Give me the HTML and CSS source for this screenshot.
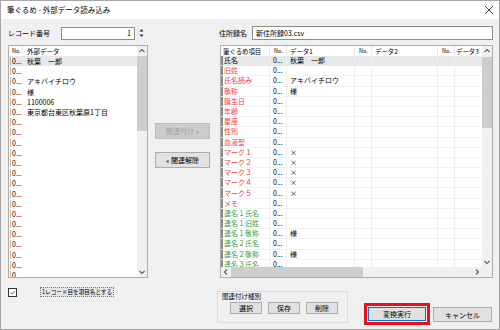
FILE: index.html
```html
<!DOCTYPE html>
<html lang="ja">
<head>
<meta charset="utf-8">
<title>筆ぐるめ - 外部データ読み込み</title>
<link rel="stylesheet" href="styles.css">
</head>
<body>
<div class="window">
  <div class="titlebar">
    <span class="title">筆ぐるめ - 外部データ読み込み</span>
    <svg class="close" width="10" height="10" viewBox="0 0 10 10"><path d="M1 1 L9 9 M9 1 L1 9" stroke="#333" stroke-width="0.9" fill="none"/></svg>
  </div>
  <div class="main">
    <div class="left">
      <div class="fieldrow">
        <span class="rec-label">レコード番号</span>
        <div class="spin-input">1</div>
        <div class="spin-btns">
          <svg width="9" height="6" viewBox="0 0 9 6"><path d="M2.5 4.5 L4.5 2 L6.5 4.5 Z" fill="#333"/></svg>
          <svg width="9" height="6" viewBox="0 0 9 6"><path d="M2.5 1.5 L4.5 4 L6.5 1.5 Z" fill="#333"/></svg>
        </div>
      </div>
      <div class="listbox">
        <div class="list-body">
          <div class="lhead"><span class="lc-no hsmall">No.</span><span class="lc-data">外部データ</span></div>
          <div class="lrow sel"><span class="lc-no"><i class="ind"></i>0...</span><span class="lc-data">秋葉　一郎</span></div>
          <div class="lrow"><span class="lc-no"><i class="ind"></i>0...</span><span class="lc-data"></span></div>
          <div class="lrow"><span class="lc-no"><i class="ind"></i>0...</span><span class="lc-data">アキバイチロウ</span></div>
          <div class="lrow"><span class="lc-no"><i class="ind"></i>0...</span><span class="lc-data">様</span></div>
          <div class="lrow"><span class="lc-no"><i class="ind"></i>0...</span><span class="lc-data">1100006</span></div>
          <div class="lrow"><span class="lc-no"><i class="ind"></i>0...</span><span class="lc-data">東京都台東区秋葉原1丁目</span></div>
          <div class="lrow"><span class="lc-no"><i class="ind"></i>0...</span><span class="lc-data"></span></div>
          <div class="lrow"><span class="lc-no"><i class="ind"></i>0...</span><span class="lc-data"></span></div>
          <div class="lrow"><span class="lc-no"><i class="ind"></i>0...</span><span class="lc-data"></span></div>
          <div class="lrow"><span class="lc-no"><i class="ind"></i>0...</span><span class="lc-data"></span></div>
          <div class="lrow"><span class="lc-no"><i class="ind"></i>0...</span><span class="lc-data"></span></div>
          <div class="lrow"><span class="lc-no"><i class="ind"></i>0...</span><span class="lc-data"></span></div>
          <div class="lrow"><span class="lc-no"><i class="ind"></i>0...</span><span class="lc-data"></span></div>
          <div class="lrow"><span class="lc-no"><i class="ind"></i>0...</span><span class="lc-data"></span></div>
          <div class="lrow"><span class="lc-no"><i class="ind"></i>0...</span><span class="lc-data"></span></div>
          <div class="lrow"><span class="lc-no"><i class="ind"></i>0...</span><span class="lc-data"></span></div>
          <div class="lrow"><span class="lc-no"><i class="ind"></i>0...</span><span class="lc-data"></span></div>
          <div class="lrow"><span class="lc-no"><i class="ind"></i>0...</span><span class="lc-data"></span></div>
          <div class="lrow"><span class="lc-no"><i class="ind"></i>0...</span><span class="lc-data"></span></div>
          <div class="lrow"><span class="lc-no"><i class="ind"></i>0...</span><span class="lc-data"></span></div>
          <div class="lrow"><span class="lc-no"><i class="ind"></i>0...</span><span class="lc-data"></span></div>
          <div class="lrow"><span class="lc-no"><i class="ind"></i>0...</span><span class="lc-data"></span></div>
        </div>
        <div class="vscroll">
          <svg class="arrow" width="10" height="10" viewBox="0 0 10 10"><path d="M2.5 6 L5 3.5 L7.5 6" stroke="#606060" stroke-width="1.1" fill="none"/></svg>
          <div class="track"><div class="thumb left-thumb"></div></div>
          <svg class="arrow" width="10" height="10" viewBox="0 0 10 10"><path d="M2.5 4 L5 6.5 L7.5 4" stroke="#606060" stroke-width="1.1" fill="none"/></svg>
        </div>
      </div>
      <div class="checkrow">
        <span class="checkbox"><svg width="9" height="9" viewBox="0 0 9 9"><path d="M1.8 4.6 L3.6 6.4 L7.2 2.6" stroke="#222" stroke-width="0.9" fill="none"/></svg></span>
        <span class="checklabel">1レコード目を項目名とする</span>
      </div>
    </div>

    <div class="middle">
      <div class="btn mid-btn disabled">関連付け »</div>
      <div class="btn mid-btn second">« 関連解除</div>
    </div>

    <div class="right">
      <div class="fieldrow">
        <span class="name-label">住所録名</span>
        <div class="text-input">新住所録03.csv</div>
      </div>
      <div class="grid">
        <div class="grid-top">
          <div class="grid-body">
            <div class="ghead">
              <span class="gc item">筆ぐるめ項目</span><span class="gc no hsmall">No.</span><span class="gc d1">データ1</span><span class="gc no hsmall">No.</span><span class="gc d2">データ2</span><span class="gc no hsmall">No.</span><span class="gc d3">データ3</span>
            </div>
            <div class="grow sel"><span class="gc item"><i class="gind"></i>氏名</span><span class="gc no">0...</span><span class="gc d1">秋葉　一郎</span><span class="gc no"></span><span class="gc d2"></span><span class="gc no"></span><span class="gc d3"></span></div>
            <div class="grow"><span class="gc item red"><i class="gind"></i>旧姓</span><span class="gc no">0...</span><span class="gc d1"></span><span class="gc no"></span><span class="gc d2"></span><span class="gc no"></span><span class="gc d3"></span></div>
            <div class="grow"><span class="gc item red"><i class="gind"></i>氏名読み</span><span class="gc no">0...</span><span class="gc d1">アキバイチロウ</span><span class="gc no"></span><span class="gc d2"></span><span class="gc no"></span><span class="gc d3"></span></div>
            <div class="grow"><span class="gc item red"><i class="gind"></i>敬称</span><span class="gc no">0...</span><span class="gc d1">様</span><span class="gc no"></span><span class="gc d2"></span><span class="gc no"></span><span class="gc d3"></span></div>
            <div class="grow"><span class="gc item red"><i class="gind"></i>誕生日</span><span class="gc no">0...</span><span class="gc d1"></span><span class="gc no"></span><span class="gc d2"></span><span class="gc no"></span><span class="gc d3"></span></div>
            <div class="grow"><span class="gc item red"><i class="gind"></i>年齢</span><span class="gc no">0...</span><span class="gc d1"></span><span class="gc no"></span><span class="gc d2"></span><span class="gc no"></span><span class="gc d3"></span></div>
            <div class="grow"><span class="gc item red"><i class="gind"></i>星座</span><span class="gc no">0...</span><span class="gc d1"></span><span class="gc no"></span><span class="gc d2"></span><span class="gc no"></span><span class="gc d3"></span></div>
            <div class="grow"><span class="gc item red"><i class="gind"></i>性別</span><span class="gc no">0...</span><span class="gc d1"></span><span class="gc no"></span><span class="gc d2"></span><span class="gc no"></span><span class="gc d3"></span></div>
            <div class="grow"><span class="gc item red"><i class="gind"></i>血液型</span><span class="gc no">0...</span><span class="gc d1"></span><span class="gc no"></span><span class="gc d2"></span><span class="gc no"></span><span class="gc d3"></span></div>
            <div class="grow"><span class="gc item red"><i class="gind"></i>マーク１</span><span class="gc no">0...</span><span class="gc d1">×</span><span class="gc no"></span><span class="gc d2"></span><span class="gc no"></span><span class="gc d3"></span></div>
            <div class="grow"><span class="gc item red"><i class="gind"></i>マーク２</span><span class="gc no">0...</span><span class="gc d1">×</span><span class="gc no"></span><span class="gc d2"></span><span class="gc no"></span><span class="gc d3"></span></div>
            <div class="grow"><span class="gc item red"><i class="gind"></i>マーク３</span><span class="gc no">0...</span><span class="gc d1">×</span><span class="gc no"></span><span class="gc d2"></span><span class="gc no"></span><span class="gc d3"></span></div>
            <div class="grow"><span class="gc item red"><i class="gind"></i>マーク４</span><span class="gc no">0...</span><span class="gc d1">×</span><span class="gc no"></span><span class="gc d2"></span><span class="gc no"></span><span class="gc d3"></span></div>
            <div class="grow"><span class="gc item red"><i class="gind"></i>マーク５</span><span class="gc no">0...</span><span class="gc d1">×</span><span class="gc no"></span><span class="gc d2"></span><span class="gc no"></span><span class="gc d3"></span></div>
            <div class="grow"><span class="gc item red"><i class="gind"></i>メモ</span><span class="gc no">0...</span><span class="gc d1"></span><span class="gc no"></span><span class="gc d2"></span><span class="gc no"></span><span class="gc d3"></span></div>
            <div class="grow"><span class="gc item green"><i class="gind"></i>連名１氏名</span><span class="gc no">0...</span><span class="gc d1"></span><span class="gc no"></span><span class="gc d2"></span><span class="gc no"></span><span class="gc d3"></span></div>
            <div class="grow"><span class="gc item green"><i class="gind"></i>連名１旧姓</span><span class="gc no">0...</span><span class="gc d1"></span><span class="gc no"></span><span class="gc d2"></span><span class="gc no"></span><span class="gc d3"></span></div>
            <div class="grow"><span class="gc item green"><i class="gind"></i>連名１敬称</span><span class="gc no">0...</span><span class="gc d1">様</span><span class="gc no"></span><span class="gc d2"></span><span class="gc no"></span><span class="gc d3"></span></div>
            <div class="grow"><span class="gc item green"><i class="gind"></i>連名２氏名</span><span class="gc no">0...</span><span class="gc d1"></span><span class="gc no"></span><span class="gc d2"></span><span class="gc no"></span><span class="gc d3"></span></div>
            <div class="grow"><span class="gc item green"><i class="gind"></i>連名２敬称</span><span class="gc no">0...</span><span class="gc d1">様</span><span class="gc no"></span><span class="gc d2"></span><span class="gc no"></span><span class="gc d3"></span></div>
            <div class="grow"><span class="gc item green"><i class="gind"></i>連名３氏名</span><span class="gc no">0...</span><span class="gc d1"></span><span class="gc no"></span><span class="gc d2"></span><span class="gc no"></span><span class="gc d3"></span></div>
          </div>
          <div class="vscroll">
            <svg class="arrow" width="10" height="10" viewBox="0 0 10 10"><path d="M2.5 6 L5 3.5 L7.5 6" stroke="#606060" stroke-width="1.1" fill="none"/></svg>
            <div class="track"><div class="thumb right-thumb"></div></div>
            <svg class="arrow" width="10" height="10" viewBox="0 0 10 10"><path d="M2.5 4 L5 6.5 L7.5 4" stroke="#606060" stroke-width="1.1" fill="none"/></svg>
          </div>
        </div>
        <div class="hscroll-row">
          <div class="hscroll">
            <svg class="arrow" width="10" height="10" viewBox="0 0 10 10"><path d="M6 2.5 L3.5 5 L6 7.5" stroke="#606060" stroke-width="1.1" fill="none"/></svg>
            <div class="htrack"><div class="hthumb"></div></div>
            <svg class="arrow" width="10" height="10" viewBox="0 0 10 10"><path d="M4 2.5 L6.5 5 L4 7.5" stroke="#606060" stroke-width="1.1" fill="none"/></svg>
          </div>
          <div class="corner"></div>
        </div>
      </div>
      <div class="bottom">
        <div class="group">
          <div class="group-label">関連付け種別</div>
          <div class="group-btns">
            <div class="btn gbtn">選択</div>
            <div class="btn gbtn">保存</div>
            <div class="btn gbtn">削除</div>
          </div>
        </div>
        <div class="highlight"><div class="btn primary">変換実行</div></div>
        <div class="btn cancel">キャンセル</div>
      </div>
    </div>
  </div>
</div>
</body>
</html>
```

FILE: styles.css
```css
* { box-sizing: border-box; margin: 0; padding: 0; }
body {
  margin: 0;
  width: 500px;
  height: 330px;
  overflow: hidden;
  font-family: "Noto Sans CJK JP", "Noto Sans", sans-serif;
  font-size: 7px;
  color: #000;
  background: #fff;
}
.window {
  width: 500px;
  height: 330px;
  border: 1px solid #a6a6a6;
  background: #f0f0f0;
  display: flex;
  flex-direction: column;
}
.titlebar {
  height: 18px;
  flex: none;
  background: #fff;
  display: flex;
  align-items: center;
  justify-content: space-between;
  padding: 0 5px 0 6px;
}
.title { font-size: 7.5px; line-height: 10px; }
.close { display: block; }

.main {
  flex: 1;
  display: flex;
  padding: 7px 0 0 7px;
}

/* left column */
.left { width: 140px; display: flex; flex-direction: column; }
.fieldrow { height: 14px; display: flex; align-items: center; }
.rec-label { width: 53px; line-height: 10px; }
.spin-input {
  width: 74px; height: 13px;
  background: #fff;
  border: 1px solid #8c8c8c;
  text-align: right;
  padding-right: 3px;
  line-height: 11px;
}
.spin-btns {
  width: 9px; height: 13px; margin-left: 2px;
  display: flex; flex-direction: column; justify-content: center;
}
.spin-btns svg { display: block; }

.listbox {
  margin-top: 5px;
  height: 233px;
  border: 1px solid #adadad;
  background: #fff;
  display: flex;
  flex: none;
}
.list-body { flex: 1; overflow: hidden; }
.lhead { height: 10px; display: flex; align-items: center; font-size: 6.5px; }
.lrow { height: 10.2px; display: flex; align-items: center; }
.lrow.sel { background: #e8e8e8; }
.lc-no {
  width: 14px; flex: none;
  display: flex; align-items: center;
  padding-left: 1px;
  line-height: 10px;
  white-space: nowrap; overflow: hidden;
}
.lhead .lc-no { padding-left: 3px; border-right: 1px solid #ececec; height: 10px; }
.lc-data { padding-left: 4px; line-height: 10px; white-space: nowrap; }
.hsmall { font-size: 5.5px; }
.ind { display: block; width: 1px; height: 8px; background: #c9b79c; margin-right: 1px; flex: none; }

.vscroll {
  width: 10px; flex: none;
  background: #f0f0f0;
  display: flex; flex-direction: column;
}
.arrow { display: block; flex: none; }
.track { flex: 1; }
.thumb { background: #cdcdcd; width: 10px; }
.left-thumb { height: 75px; }
.right-thumb { height: 71px; margin-top: 1px; }

.checkrow { margin-top: 9px; height: 10px; display: flex; align-items: center; }
.checkbox {
  width: 9px; height: 9px;
  border: 1px solid #333;
  background: #fff;
  display: flex; align-items: center; justify-content: center;
}
.checkbox svg { display: block; }
.checklabel {
  margin-left: 23px;
  height: 10px;
  line-height: 8px;
  padding: 0 1px;
  font-size: 5.6px;
  border: 1px dotted #777;
  background: #e6e6e6;
  white-space: nowrap;
}

/* middle */
.middle { width: 72px; padding-left: 7px; display: flex; flex-direction: column; }
.btn {
  background: #e1e1e1;
  border: 1px solid #adadad;
  display: flex; align-items: center; justify-content: center;
  white-space: nowrap;
}
.mid-btn { width: 55px; height: 16px; margin-top: 97px; }
.mid-btn.second { margin-top: 13px; }
.disabled { background: #cccccc; border-color: #bfbfbf; color: #a0a0a0; }

/* right column */
.right { width: 273px; display: flex; flex-direction: column; }
.name-label { width: 33px; line-height: 10px; margin-left: -1px; }
.text-input {
  flex: 1; height: 14px;
  background: #fff;
  border: 1px solid #8c8c8c;
  padding-left: 3px;
  line-height: 12px;
}
.grid {
  margin-top: 5px;
  height: 233px;
  border: 1px solid #adadad;
  background: #fff;
  display: flex; flex-direction: column;
  flex: none;
}
.grid-top { height: 221px; display: flex; }
.grid-body { flex: 1; overflow: hidden; }
.ghead { height: 10px; display: flex; font-size: 6.4px; }
.grow { height: 10.2px; display: flex; border-bottom: 1px dotted #e6e6e6; }
.grow.sel { background: #e8e8e8; }
.gc {
  flex: none;
  display: flex; align-items: center;
  border-right: 1px solid #efefef;
  white-space: nowrap; overflow: hidden;
  line-height: 9px;
}
.ghead .gc { border-right-color: #e8e8e8; }
.ghead .hsmall { font-size: 5.5px; }
.item { width: 49px; padding-left: 0; }
.ghead .item { padding-left: 2px; }
.no { width: 17px; padding-left: 3px; }
.ghead .no { padding-left: 4px; }
.d1 { width: 68px; padding-left: 3px; }
.d2 { width: 66px; padding-left: 3px; }
.d3 { flex: 1; min-width: 0; padding-left: 1px; border-right: none; }
.gind { display: block; width: 2px; height: 100%; background: #8a8a8a; margin-right: 1px; flex: none; }
.red { color: #f03c3c; }
.green { color: #3c9c3c; }

.hscroll-row { height: 10px; display: flex; flex: none; }
.hscroll { flex: 1; display: flex; background: #f0f0f0; }
.htrack { flex: 1; }
.hthumb { width: 132px; height: 10px; background: #cdcdcd; }
.corner { width: 10px; background: #f0f0f0; }

.bottom { display: flex; align-items: flex-start; }
.group {
  margin-left: -3px;
  margin-top: 13px;
  width: 131px; height: 32px;
  border: 1px solid #dcdcdc;
  padding: 1px 0 0 4px;
}
.group-label { line-height: 7px; height: 8px; font-size: 6.5px; }
.group-btns { display: flex; gap: 6px; margin-top: 1px; padding-left: 8px; }
.gbtn { width: 32px; height: 12px; }
.highlight {
  margin-left: 16px;
  margin-top: 25px;
  width: 66px; height: 22px;
  border: 3px solid #e8101c;
  padding: 1px;
}
.primary { width: 100%; height: 100%; border-color: #0078d7; }
.cancel { margin-left: 3px; margin-top: 29px; width: 59px; height: 15px; }
```
